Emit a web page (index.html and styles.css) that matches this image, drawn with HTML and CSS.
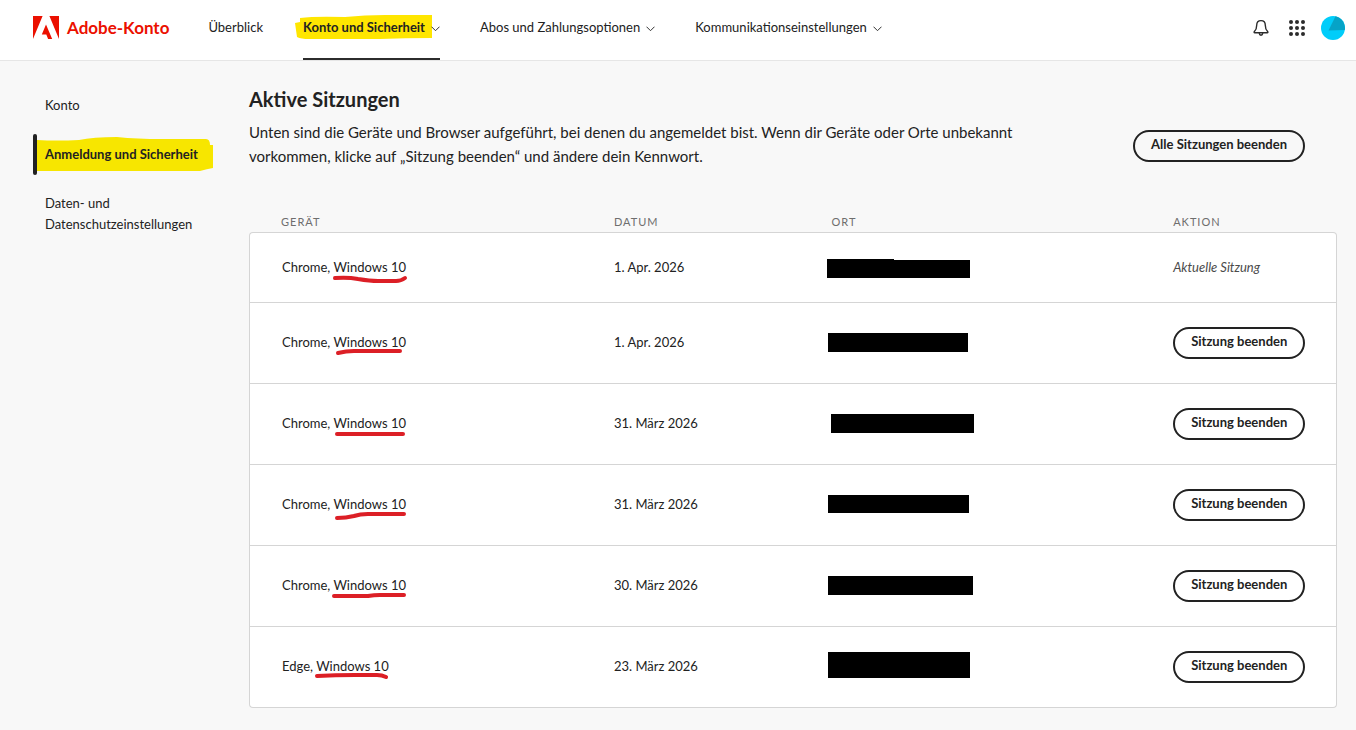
FILE: index.html
```html
<!DOCTYPE html>
<html lang="de">
<head>
    <meta charset="UTF-8">
    <meta name="viewport" content="width=device-width, initial-scale=1.0">
    <title>Adobe-Konto</title>
    <link rel="stylesheet" href="styles.css">
</head>
<body>
    <header class="topbar">
        <a class="brand" href="#">
            <svg width="26" height="23" viewBox="0 0 26 23" fill="#eb1000" aria-hidden="true">
                <path d="M0 0h9.6L0 23zM16.4 0H26v23zM13 8.5L19.2 23h-4.1l-1.8-4.6H8.8z"/>
            </svg>
            <span>Adobe-Konto</span>
        </a>

        <nav class="main-nav">
            <a href="#">Überblick</a>
            <a class="active" href="#">
                <span class="mark">
                    <svg class="highlight" width="138" height="26" viewBox="0 0 138 26" aria-hidden="true">
                        <path d="M5 4Q20 2 50 3Q70 1 90 1H137V24Q110 24 85 25H14Q6 25 2 23L0 9L5 8z"/>
                    </svg>
                    <span class="label">Konto und Sicherheit</span>
                </span>
                <svg class="chevron" width="9" height="6" viewBox="0 0 9 6" aria-hidden="true"><path d="M.5 .7l4 4 4-4"/></svg>
            </a>
            <a href="#">
                Abos und Zahlungsoptionen
                <svg class="chevron" width="9" height="6" viewBox="0 0 9 6" aria-hidden="true"><path d="M.5 .7l4 4 4-4"/></svg>
            </a>
            <a href="#">
                Kommunikationseinstellungen
                <svg class="chevron" width="9" height="6" viewBox="0 0 9 6" aria-hidden="true"><path d="M.5 .7l4 4 4-4"/></svg>
            </a>
        </nav>

        <div class="tools">
            <button type="button" aria-label="Benachrichtigungen">
                <svg width="16" height="18" viewBox="0 0 16 18" fill="none" stroke="#2c2c2c" stroke-width="1.4" stroke-linejoin="round">
                    <path d="M8 1.6c-2.8 0-4.3 2-4.3 4.6 0 4-.9 5-2.3 6.3-.6.6-.4 1.3.4 1.3h12.4c.8 0 1-.7.4-1.3-1.4-1.3-2.3-2.3-2.3-6.3 0-2.6-1.5-4.6-4.3-4.6z"/>
                    <path d="M6.2 14.2c.2 1.4.9 2 1.8 2s1.6-.6 1.8-2"/>
                </svg>
            </button>
            <button type="button" aria-label="Apps">
                <svg width="16" height="16" viewBox="0 0 16 16" fill="#2c2c2c">
                    <circle cx="2" cy="2" r="2"/><circle cx="8" cy="2" r="2"/><circle cx="14" cy="2" r="2"/>
                    <circle cx="2" cy="8" r="2"/><circle cx="8" cy="8" r="2"/><circle cx="14" cy="8" r="2"/>
                    <circle cx="2" cy="14" r="2"/><circle cx="8" cy="14" r="2"/><circle cx="14" cy="14" r="2"/>
                </svg>
            </button>
            <button type="button" aria-label="Profil">
                <svg width="24" height="24" viewBox="0 0 24 24">
                    <circle cx="12" cy="12" r="12" fill="#00cdfa"/>
                    <path d="M7.5 14.5L14.5 .3A12 12 0 0 1 23.8 14z" fill="#06a3c7"/>
                </svg>
            </button>
        </div>
    </header>

    <div class="page">
        <aside class="sidebar">
            <a href="#">Konto</a>
            <a class="active" href="#">
                <span class="mark">
                    <svg class="highlight" width="176" height="35" viewBox="0 0 176 35" aria-hidden="true">
                        <path d="M0 3Q20 4 42 3Q56 0 80 0Q100 2 125 2H169Q173 2 173 8H176V31Q170 32 163 34H0z"/>
                    </svg>
                    <span class="label">Anmeldung und Sicherheit</span>
                </span>
            </a>
            <a href="#">Daten- und Datenschutzeinstellungen</a>
        </aside>

        <main>
            <div class="intro">
                <div class="intro-text">
                    <h1>Aktive Sitzungen</h1>
                    <p>Unten sind die Geräte und Browser aufgeführt, bei denen du angemeldet bist. Wenn dir Geräte oder Orte unbekannt vorkommen, klicke auf „Sitzung beenden“ und ändere dein Kennwort.</p>
                </div>
                <button class="btn" type="button">Alle Sitzungen beenden</button>
            </div>

            <table class="sessions">
                <thead>
                    <tr>
                        <th class="col-device">Gerät</th>
                        <th class="col-date">Datum</th>
                        <th class="col-place">Ort</th>
                        <th class="col-action">Aktion</th>
                    </tr>
                </thead>
                <tbody>
                    <tr class="current">
                        <td>Chrome, <span class="mark">Windows 10<svg class="stroke" width="76" height="12" viewBox="0 0 76 12" aria-hidden="true"><path d="M3 4Q16 3 26 5Q38 7 46 7H64Q69 7 73 4"/></svg></span></td>
                        <td>1. Apr. 2026</td>
                        <td class="place"><svg width="150" height="30" viewBox="0 0 150 30" role="img" aria-label="Ort geschwärzt"><path d="M1 6h67v1h76v18H1z"/></svg></td>
                        <td><em>Aktuelle Sitzung</em></td>
                    </tr>
                    <tr>
                        <td>Chrome, <span class="mark">Windows 10<svg class="stroke" width="76" height="12" viewBox="0 0 76 12" aria-hidden="true"><path d="M6 4Q14 2 22 2H68"/></svg></span></td>
                        <td>1. Apr. 2026</td>
                        <td class="place"><svg width="150" height="30" viewBox="0 0 150 30" role="img" aria-label="Ort geschwärzt"><path d="M2 5h140v19H2z"/></svg></td>
                        <td><button class="btn" type="button">Sitzung beenden</button></td>
                    </tr>
                    <tr>
                        <td>Chrome, <span class="mark">Windows 10<svg class="stroke" width="76" height="12" viewBox="0 0 76 12" aria-hidden="true"><path d="M5 4H71"/></svg></span></td>
                        <td>31. März 2026</td>
                        <td class="place"><svg width="150" height="30" viewBox="0 0 150 30" role="img" aria-label="Ort geschwärzt"><path d="M5 5h143v19H5z"/></svg></td>
                        <td><button class="btn" type="button">Sitzung beenden</button></td>
                    </tr>
                    <tr>
                        <td>Chrome, <span class="mark">Windows 10<svg class="stroke" width="76" height="12" viewBox="0 0 76 12" aria-hidden="true"><path d="M5 7Q14 7 22 5Q28 3 36 3H72"/></svg></span></td>
                        <td>31. März 2026</td>
                        <td class="place"><svg width="150" height="30" viewBox="0 0 150 30" role="img" aria-label="Ort geschwärzt"><path d="M2 5h141v18H2z"/></svg></td>
                        <td><button class="btn" type="button">Sitzung beenden</button></td>
                    </tr>
                    <tr>
                        <td>Chrome, <span class="mark">Windows 10<svg class="stroke" width="76" height="12" viewBox="0 0 76 12" aria-hidden="true"><path d="M2 4H36Q42 3 48 3H72"/></svg></span></td>
                        <td>30. März 2026</td>
                        <td class="place"><svg width="150" height="30" viewBox="0 0 150 30" role="img" aria-label="Ort geschwärzt"><path d="M2 5h145v19H2z"/></svg></td>
                        <td><button class="btn" type="button">Sitzung beenden</button></td>
                    </tr>
                    <tr>
                        <td>Edge, <span class="mark">Windows 10<svg class="stroke" width="76" height="12" viewBox="0 0 76 12" aria-hidden="true"><path d="M2 3Q20 2 40 2H62Q67 2 71 4"/></svg></span></td>
                        <td>23. März 2026</td>
                        <td class="place"><svg width="150" height="30" viewBox="0 0 150 30" role="img" aria-label="Ort geschwärzt"><path d="M2 0h142v26H2z"/></svg></td>
                        <td><button class="btn" type="button">Sitzung beenden</button></td>
                    </tr>
                </tbody>
            </table>
        </main>
    </div>
</body>
</html>
```
FILE: styles.css
```css
* {
    box-sizing: border-box;
}

body {
    margin: 0;
    background: #f8f8f8;
    color: #222;
    font-family: Lato, "Open Sans", sans-serif;
    font-size: 13px;
    line-height: 21px;
}

a {
    color: inherit;
    text-decoration: none;
}

button {
    font-family: inherit;
    cursor: pointer;
}

svg {
    display: block;
}

/* Header */
.topbar {
    display: flex;
    align-items: stretch;
    height: 61px;
    padding: 0 11px 0 33px;
    background: #fff;
    border-bottom: 1px solid #e6e6e6;
}

.brand {
    display: flex;
    align-items: center;
    gap: 8px;
    margin-right: 39px;
    padding-bottom: 5px;
    color: #eb1000;
    font-size: 17px;
    font-weight: 700;
}

.main-nav {
    display: flex;
    gap: 40px;
    white-space: nowrap;
}

.main-nav a {
    display: flex;
    align-items: center;
    gap: 6px;
    padding-bottom: 4px;
    border-bottom: 2px solid transparent;
}

.main-nav .active {
    border-bottom-color: #2c2c2c;
    font-weight: 700;
}

.chevron {
    position: relative;
    margin-top: 4px;
    fill: none;
    stroke: #333;
}

.tools {
    display: flex;
    align-items: center;
    gap: 16px;
    margin-left: auto;
    padding-bottom: 4px;
}

.tools button {
    padding: 0;
    border: 0;
    background: none;
}

.tools button:nth-child(1) {
    margin-right: 4px;
}

/* Marker pen */
.mark {
    position: relative;
}

.mark .label {
    position: relative;
}

.highlight {
    position: absolute;
    top: -3px;
    left: -8px;
    fill: #ffe600;
}

.stroke {
    position: absolute;
    top: 15px;
    left: -1px;
    fill: none;
    stroke: #dc1f26;
    stroke-width: 4;
    stroke-linecap: round;
}

/* Layout */
.page {
    display: grid;
    grid-template-columns: 180px 1fr;
    gap: 36px;
    padding: 24px 19px 22px 33px;
}

.sidebar {
    display: flex;
    flex-direction: column;
    gap: 8px;
}

.sidebar a {
    position: relative;
    padding: 10px 0 10px 12px;
}

.sidebar .active {
    font-weight: 700;
    white-space: nowrap;
}

.sidebar .active::before {
    content: "";
    position: absolute;
    z-index: 1;
    top: 0;
    bottom: 0;
    left: 0;
    width: 4px;
    border-radius: 2px;
    background: #222;
}

.sidebar .highlight {
    top: -9px;
    fill: #f7e600;
}

.intro {
    display: flex;
    align-items: center;
    justify-content: space-between;
    padding-right: 32px;
}

.intro-text {
    max-width: 780px;
}

h1 {
    margin: 1px 0 8px;
    font-size: 20px;
    line-height: 26px;
}

.intro p {
    margin: 0;
    font-size: 15px;
    line-height: 24px;
}

.btn {
    height: 32px;
    padding: 0 16px 4px;
    border: 2px solid #222;
    border-radius: 16px;
    background: transparent;
    color: #222;
    font-size: 13px;
    font-weight: 700;
    white-space: nowrap;
}

.intro .btn {
    margin-top: 39px;
}

/* Sessions table */
.sessions {
    width: 100%;
    margin-top: 44px;
    border-spacing: 0;
    table-layout: fixed;
}

.sessions th {
    padding: 0 0 0 32px;
    color: #6e6e6e;
    font-size: 11px;
    font-weight: 400;
    line-height: 20px;
    letter-spacing: 1px;
    text-align: left;
    text-transform: uppercase;
}

.col-device {
    width: 30.6%;
}

.col-date {
    width: 20%;
}

.col-place {
    width: 31.4%;
}

.col-action {
    width: 18%;
}

.sessions td {
    height: 81px;
    padding: 0 0 2px 32px;
    background: #fff;
    border-bottom: 1px solid #d5d5d5;
    white-space: nowrap;
}

.sessions .current td {
    height: 71px;
    padding-bottom: 0;
    border-top: 1px solid #d5d5d5;
}

.sessions td:first-child {
    border-left: 1px solid #d5d5d5;
}

.sessions td:last-child {
    padding-bottom: 0;
    border-right: 1px solid #d5d5d5;
}

.sessions .place {
    padding: 0 0 0 26px;
}

.sessions em {
    color: #4b4b4b;
}

.sessions .current td:first-child {
    border-top-left-radius: 4px;
}

.sessions .current td:last-child {
    border-top-right-radius: 4px;
}

.sessions tr:last-child td:first-child {
    border-bottom-left-radius: 4px;
}

.sessions tr:last-child td:last-child {
    border-bottom-right-radius: 4px;
}
```
